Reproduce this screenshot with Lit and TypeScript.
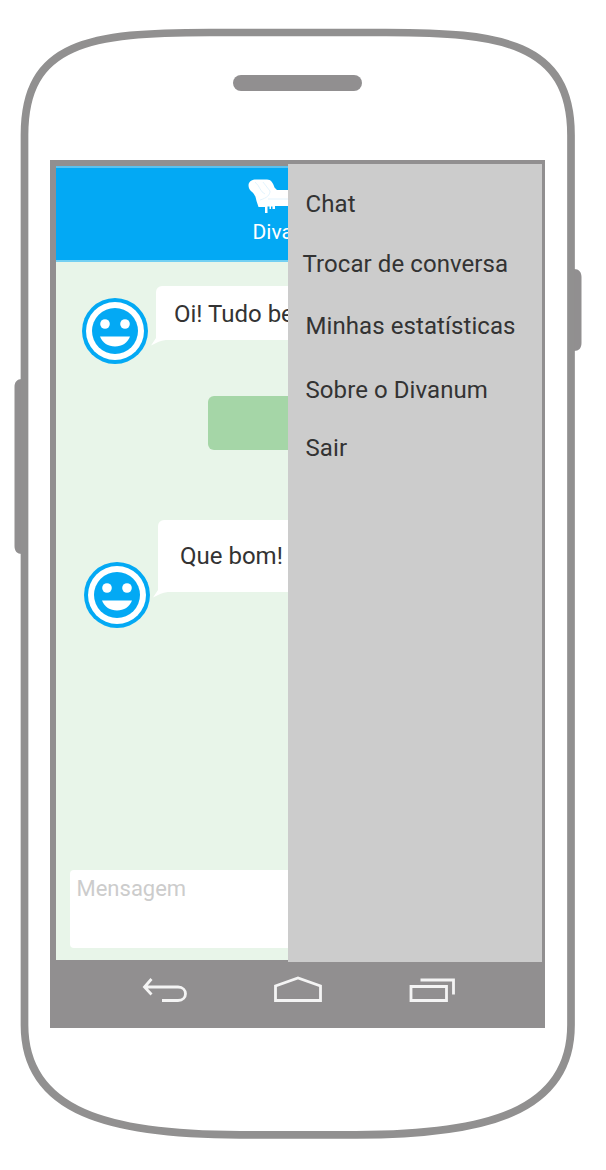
import { LitElement, html, css, svg } from 'lit';
import { customElement, property } from 'lit/decorators.js';

@customElement('smile-avatar')
class SmileAvatar extends LitElement {
  static styles = css`
    :host { display: block; flex: none; width: 66px; height: 66px; }
    svg { display: block; }
  `;
  render() {
    return html`<svg width="66" height="66" viewBox="0 0 66 66">
      <circle cx="33" cy="33" r="33" fill="#03a9f4" />
      <circle cx="33" cy="33" r="29" fill="#fff" />
      <circle cx="33" cy="33" r="23" fill="#03a9f4" />
      <circle cx="23" cy="26" r="4.800" fill="#fff" />
      <circle cx="43" cy="26" r="4.800" fill="#fff" />
      <path d="M18 38.500H48C45.500 45 40 48.500 33 48.500S20.500 45 18 38.500Z" fill="#fff" />
    </svg>`;
  }
}

@customElement('chat-bubble')
class ChatBubble extends LitElement {
  static styles = css`
    :host { display: block; position: relative; flex: none; width: 330px; box-sizing: border-box;
      background: #fff; border-radius: 6px 6px 6px 0; white-space: nowrap; }
    .tail { position: absolute; left: -5px; bottom: -6px; display: block; }
  `;
  render() {
    return html`<slot></slot>
      <svg class="tail" width="18" height="13" viewBox="0 0 18 13"><path d="M5 0V5L0 12.500C5 10 9 7.500 15 7V0Z" fill="#fff" /></svg>`;
  }
}

@customElement('side-menu')
class SideMenu extends LitElement {
  @property({ attribute: false }) items: { label: string; cls: string }[] = [];
  static styles = css`
    :host { display: block; background: #ccc; color: #333; box-sizing: border-box; padding-top: 26px; }
    .list { display: flex; flex-direction: column; }
    .item { font-size: 24px; letter-spacing: 0.08px; line-height: 28px; height: 28px; white-space: nowrap; padding-left: 17.500px; }
    .chat { margin-bottom: 32px; }
    .switch { margin-bottom: 34px; padding-left: 14.500px; }
    .stats { margin-bottom: 36px; }
    .about { margin-bottom: 30px; }
  `;
  render() {
    return html`<nav class="list">${this.items.map((i) => html`<div class="item ${i.cls}">${i.label}</div>`)}</nav>`;
  }
}

const couch = svg`
  <path d="M0.500 6C1 1.500 5 0.500 9 0.500H19C23 0.500 25 4 26.500 8.500L29 11H70V27H27V30H24.500V27.500H23V30H21.500V27.500H19.500V34H17V28H10.500L8.500 22C7.500 17 6.500 15 3.500 12.500C1.500 11 0.500 9 0.500 6Z" fill="#fff"/>
  <path d="M7 3C12 7 12 13 17 15M15 3L22 12C22 16 19 19 12 21M20 20H70" fill="none" stroke="#dff2fd" stroke-width="0.900"/>`;

@customElement('app-root')
class AppRoot extends LitElement {
  static styles = css`
    :host { display: block; width: 606px; height: 1170px; overflow: hidden; background: #fff;
      font-family: Roboto, "Noto Sans", sans-serif; color: #333; }
    .phone { position: relative; width: 606px; height: 1170px; box-sizing: border-box; padding: 75px 0 0 50px; }
    .case { position: absolute; left: 0; top: 0; }
    .speaker { position: relative; width: 129px; height: 16px; margin-left: 183px; border-radius: 8px; background: #918f90; }
    .screen { position: relative; width: 495px; height: 867.500px; margin-top: 69px; box-sizing: border-box;
      border: 6px solid #918f90; border-top-width: 4px; border-right-width: 3px; border-bottom: 0;
      padding-top: 2px; background: #918f90; display: flex; flex-direction: column; overflow: hidden; }
    .header { flex: none; height: 96px; box-sizing: border-box; border-top: 2px solid #5cc1ee; border-bottom: 2px solid #74d0f2;
      background: #03a9f4; color: #fff; display: flex; flex-direction: column; padding: 11px 0 0 192px; }
    .couch { display: block; }
    .brand { font-size: 21px; line-height: 24px; padding-left: 4.500px; margin-top: 5px; }
    .chat { flex: none; height: 698px; box-sizing: border-box; background: #e8f5e9; display: flex; flex-direction: column; padding: 24px 0 0 14px; }
    .row { display: flex; flex: none; }
    .first { padding-left: 12px; gap: 8px; height: 78px; }
    .first smile-avatar { margin-top: 12px; }
    .first chat-bubble { height: 54px; padding: 14px 18px; }
    .second { padding-left: 14px; gap: 8px; margin-top: 70px; height: 108px; }
    .second smile-avatar { margin-top: 42px; }
    .second chat-bubble { height: 72px; padding: 22px 22px; }
    .line { font-size: 24px; line-height: 28px; }
    .reply { flex: none; height: 54px; width: 260px; margin: 32px 0 0 138px; border-radius: 6px; background: #a5d6a7; }
    .field { flex: none; height: 78px; width: 460px; box-sizing: border-box; margin-top: 242px; padding: 5px 6.500px;
      border-radius: 4px; background: #fff; color: #ccc; font-size: 22px; line-height: 28px; }
    .nav { flex: 1; background: #918f90; display: flex; align-items: flex-start; padding: 14px 0 0 86px; }
    .nav svg { display: block; flex: none; }
    .home { margin-left: 85px; }
    .recent { margin-left: 85px; }
    side-menu { position: absolute; left: 232px; top: 0; width: 254px; height: 798px; }
  `;
  private items = [
    { label: 'Chat', cls: 'chat' },
    { label: 'Trocar de conversa', cls: 'switch' },
    { label: 'Minhas estatísticas', cls: 'stats' },
    { label: 'Sobre o Divanum', cls: 'about' },
    { label: 'Sair', cls: 'exit' },
  ];
  render() {
    return html`<div class="phone">
      <svg class="case" width="606" height="1170" viewBox="0 0 606 1170">
        <path d="M22 379C17 379 14.500 382 14.500 387V546C14.500 551 17 554 22 554Z M574 269C579 269 581.500 272 581.500 277V343C581.500 348 579 351 574 351Z" fill="#918f90" />
        <path d="M24.500 135C24.500 42 90 32.500 210 32.500H386C500 32.500 571 42 571 135V1025C571 1112 486 1134.800 356 1134.800H240C110 1134.800 24.500 1112 24.500 1025Z" fill="#fff" stroke="#919090" stroke-width="7.700" />
      </svg>
      <div class="speaker"></div>
      <div class="screen">
        <header class="header">
          <svg class="couch" width="70" height="36" viewBox="0 0 70 36">${couch}</svg>
          <div class="brand">Divanum</div>
        </header>
        <main class="chat">
          <div class="row first"><smile-avatar></smile-avatar><chat-bubble><span class="line">Oi! Tudo bem?</span></chat-bubble></div>
          <div class="reply"></div>
          <div class="row second"><smile-avatar></smile-avatar><chat-bubble><span class="line">Que bom!</span></chat-bubble></div>
          <div class="field">Mensagem</div>
        </main>
        <footer class="nav">
          <svg width="46" height="32" viewBox="0 0 46 32" fill="none" stroke="#f4f4f4" stroke-width="2.800"><path d="M9.500 5L2.500 13L9.500 20.500M2.500 13H36C46 13 46 26.500 36 26.500H20" /></svg>
          <svg class="home" width="50" height="32" viewBox="0 0 50 32" fill="none" stroke="#f4f4f4" stroke-width="2.800"><path d="M2.500 26.500V12L25 4L47.500 12V26.500Z" /></svg>
          <svg class="recent" width="50" height="32" viewBox="0 0 50 32" fill="none" stroke="#f4f4f4" stroke-width="2.800"><path d="M3 12.500H38.500V26.500H3ZM12.500 6H45.500V20.500" /></svg>
        </footer>
        <side-menu .items=${this.items}></side-menu>
      </div>
    </div>`;
  }
}
